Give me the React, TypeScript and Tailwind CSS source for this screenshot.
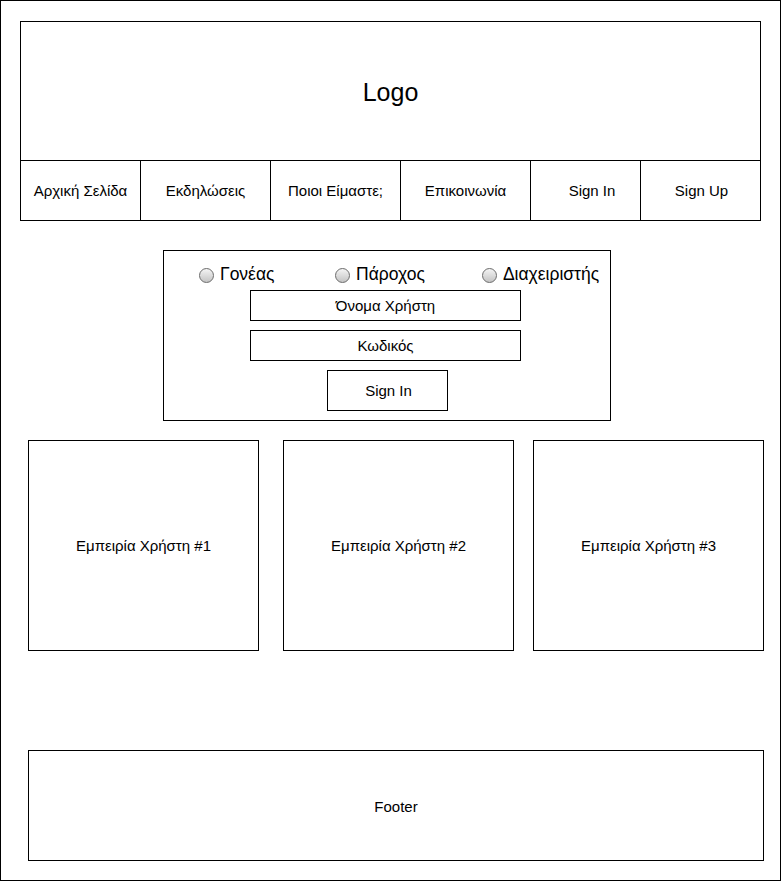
const NAV = [
  { label: "Αρχική Σελίδα", w: "w-[119px]" },
  { label: "Εκδηλώσεις", w: "w-[130px] border-l" },
  { label: "Ποιοι Είμαστε;", w: "w-[130px] border-l" },
  { label: "Επικοινωνία", w: "w-[130px] border-l" },
  { label: "Sign In", w: "w-[110px] border-l pl-[13px]" },
  { label: "Sign Up", w: "w-[120px] border-l pl-[2px]" },
];

const ROLES = [
  { label: "Γονέας", w: "w-[138px]" },
  { label: "Πάροχος", w: "w-[149px]" },
  { label: "Διαχειριστής", w: "w-[130px]" },
];

function Radio({ label }: { label: string }) {
  return (
    <span className="flex items-center gap-[6px]">
      <span className="h-[15px] w-[15px] rounded-full border border-[#6b6b6b] bg-gradient-to-b from-[#f4f4f4] to-[#c4c4c4]" />
      <span className="text-[17.5px] leading-none text-black">{label}</span>
    </span>
  );
}

export default function App() {
  return (
    <div className="h-[881px] w-[781px] overflow-hidden border border-black bg-white font-['Liberation_Sans',Arial,sans-serif] text-[15px] text-black">
      {/* Header: logo + nav */}
      <header className="ml-[19px] mt-[20px] w-[741px] border border-black">
        <div className="flex h-[139px] items-center justify-center border-b border-black pt-[3px] text-[25px]">
          Logo
        </div>
        <nav className="flex h-[59px]">
          {NAV.map((item) => (
            <div
              key={item.label}
              className={`flex items-center justify-center border-black pt-[2px] ${item.w}`}
            >
              {item.label}
            </div>
          ))}
        </nav>
      </header>

      {/* Login form */}
      <div className="ml-[162px] mt-[29px] w-[448px] border border-black pb-[9px] pt-[15px]">
        <div className="ml-[35px] flex h-[18px] items-center">
          {ROLES.map((r) => (
            <div key={r.label} className={r.w}>
              <Radio label={r.label} />
            </div>
          ))}
        </div>
        <div className="ml-[86px] mt-[6px] flex h-[31px] w-[271px] items-center justify-center border border-black pt-[2px]">
          Όνομα Χρήστη
        </div>
        <div className="ml-[86px] mt-[9px] flex h-[31px] w-[271px] items-center justify-center border border-black pt-[2px]">
          Κωδικός
        </div>
        <button className="ml-[163px] mt-[9px] flex h-[41px] w-[121px] items-center justify-center border border-black pl-[2px] pt-[2px]">
          Sign In
        </button>
      </div>

      {/* Testimonials */}
      <div className="ml-[27px] mt-[19px] flex">
        <div className="flex h-[211px] w-[231px] items-center justify-center border border-black pt-[2px]">
          Εμπειρία Χρήστη #1
        </div>
        <div className="ml-[24px] flex h-[211px] w-[231px] items-center justify-center border border-black pt-[2px]">
          Εμπειρία Χρήστη #2
        </div>
        <div className="ml-[19px] flex h-[211px] w-[231px] items-center justify-center border border-black pt-[2px]">
          Εμπειρία Χρήστη #3
        </div>
      </div>

      {/* Footer */}
      <footer className="ml-[27px] mt-[99px] flex h-[111px] w-[736px] items-center justify-center border border-black pt-[3px]">
        Footer
      </footer>
    </div>
  );
}
